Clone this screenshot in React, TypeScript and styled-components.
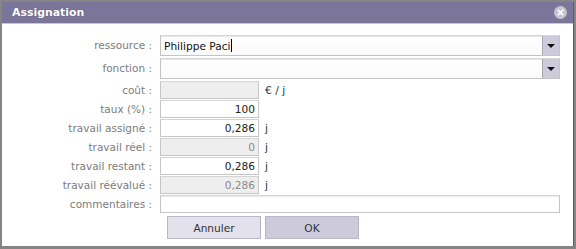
import React from "react";
import styled, { createGlobalStyle } from "styled-components";

const Global = createGlobalStyle`
  html, body { margin: 0; padding: 0; }
  body {
    background: #858585;
    font-family: "DejaVu Sans", Verdana, sans-serif;
    width: 576px;
    height: 249px;
    overflow: hidden;
  }
`;

const Dialog = styled.div`
  position: relative;
  margin: 2px 0 0 2px;
  width: 572px;
  height: 244px;
  background: #ffffff;
  box-sizing: border-box;
  border-right: 1px solid #5d5d5d;
  display: flex;
  flex-direction: column;
`;

const Header = styled.div`
  height: 21px;
  background: #7b7599;
  border-bottom: 1px solid #c9c7d4;
  display: flex;
  align-items: center;
  justify-content: space-between;
  padding: 0 6px 0 10px;
`;

const Title = styled.div`
  color: #ffffff;
  font-weight: bold;
  font-size: 10.9px;
  text-shadow: 0 0 1px rgba(60, 55, 90, 0.6);
`;

const Close = styled.div`
  width: 13px;
  height: 13px;
  display: flex;
`;

const Form = styled.div`
  display: grid;
  grid-template-columns: 150px 1fr;
  column-gap: 8px;
  padding: 11px 13px 0 0;
  align-items: center;
`;

const Label = styled.div<{ $h: number; $mb: number }>`
  height: ${(p) => p.$h}px;
  margin-bottom: ${(p) => p.$mb}px;
  line-height: ${(p) => p.$h}px;
  text-align: right;
  color: #7c7c7c;
  font-size: 10.5px;
  white-space: nowrap;
`;

const FieldCell = styled.div<{ $h: number; $mb: number }>`
  height: ${(p) => p.$h}px;
  margin-bottom: ${(p) => p.$mb}px;
  display: flex;
  align-items: center;
  gap: 6px;
`;

const SelectBox = styled.div`
  flex: 1;
  height: 100%;
  box-sizing: border-box;
  display: flex;
  border: 1px solid #c4c4c4;
  border-top-color: #d6d6d6;
  box-shadow: inset 0 1px 1px #e4e4e4;
  background: linear-gradient(#ffffff, #fafafa);
`;

const SelectText = styled.div`
  flex: 1;
  display: flex;
  align-items: center;
  padding-left: 3px;
  font-size: 10.6px;
  color: #111;
`;

const Caret = styled.span`
  display: inline-block;
  width: 1px;
  height: 13px;
  background: #000;
  margin-left: 1px;
`;

const DropButton = styled.div`
  width: 16px;
  background: #cdcadc;
  border-left: 1px solid #a9a7b8;
  display: flex;
  align-items: center;
  justify-content: center;
`;

const Triangle = styled.div`
  width: 0;
  height: 0;
  border-left: 4px solid transparent;
  border-right: 4px solid transparent;
  border-top: 4px solid #111;
`;

const NumBox = styled.div<{ $disabled?: boolean }>`
  width: 99px;
  height: 100%;
  box-sizing: border-box;
  border: 1px solid #c6c6c6;
  border-top-color: #d4d4d4;
  background: ${(p) => (p.$disabled ? "#eeeeee" : "#ffffff")};
  color: ${(p) => (p.$disabled ? "#8a8a8a" : "#222")};
  font-size: 10.6px;
  display: flex;
  align-items: center;
  justify-content: flex-end;
  padding-right: 3px;
`;

const WideBox = styled.div`
  flex: 1;
  height: 100%;
  box-sizing: border-box;
  border: 1px solid #c6c6c6;
  border-top-color: #d4d4d4;
  box-shadow: inset 0 1px 1px #ececec;
  background: #fff;
`;

const Unit = styled.span`
  font-size: 10.8px;
  color: #2f3a3a;
`;

const Buttons = styled.div`
  grid-column: 2;
  display: flex;
  gap: 4px;
  padding-left: 7px;
  margin-top: 2px;
`;

const Button = styled.div<{ $active?: boolean }>`
  width: 94px;
  height: 23px;
  box-sizing: border-box;
  border: 1px solid #b9b7c5;
  background: ${(p) => (p.$active ? "#cdcadb" : "#e3e1ec")};
  color: #333;
  font-size: 10.6px;
  display: flex;
  align-items: center;
  justify-content: center;
`;

type Row = {
  label: string;
  kind: "select" | "num" | "wide";
  value?: string;
  disabled?: boolean;
  unit?: string;
  caret?: boolean;
};

const rows: Row[] = [
  { label: "ressource :", kind: "select", value: "Philippe Paci", caret: true },
  { label: "fonction :", kind: "select", value: "" },
  { label: "coût :", kind: "num", value: "", disabled: true, unit: "€ / j" },
  { label: "taux (%) :", kind: "num", value: "100" },
  { label: "travail assigné :", kind: "num", value: "0,286", unit: "j" },
  { label: "travail réel :", kind: "num", value: "0", disabled: true, unit: "j" },
  { label: "travail restant :", kind: "num", value: "0,286", unit: "j" },
  { label: "travail réévalué :", kind: "num", value: "0,286", disabled: true, unit: "j" },
  { label: "commentaires :", kind: "wide" },
];

export default function App() {
  return (
    <>
      <Global />
      <Dialog>
        <Header>
          <Title>Assignation</Title>
          <Close>
            <svg width="13" height="13" viewBox="0 0 13 13">
              <circle cx="6.5" cy="6.5" r="6.5" fill="#c6c4d1" />
              <path d="M4.2 4.2 L8.8 8.8 M8.8 4.2 L4.2 8.8" stroke="#ffffff" strokeWidth="1.6" strokeLinecap="round" />
            </svg>
          </Close>
        </Header>
        <Form>
          {rows.map((r) => {
            const h = r.kind === "select" ? 21 : 18;
            const mb = r.kind === "select" ? 2 : 1;
            return (
              <React.Fragment key={r.label}>
                <Label $h={h} $mb={mb}>{r.label}</Label>
                <FieldCell $h={h} $mb={mb}>
                  {r.kind === "select" && (
                    <SelectBox>
                      <SelectText>
                        {r.value}
                        {r.caret && <Caret />}
                      </SelectText>
                      <DropButton>
                        <Triangle />
                      </DropButton>
                    </SelectBox>
                  )}
                  {r.kind === "num" && (
                    <>
                      <NumBox $disabled={r.disabled}>{r.value}</NumBox>
                      {r.unit && <Unit>{r.unit}</Unit>}
                    </>
                  )}
                  {r.kind === "wide" && <WideBox />}
                </FieldCell>
              </React.Fragment>
            );
          })}
          <Buttons>
            <Button>Annuler</Button>
            <Button $active>OK</Button>
          </Buttons>
        </Form>
      </Dialog>
    </>
  );
}
